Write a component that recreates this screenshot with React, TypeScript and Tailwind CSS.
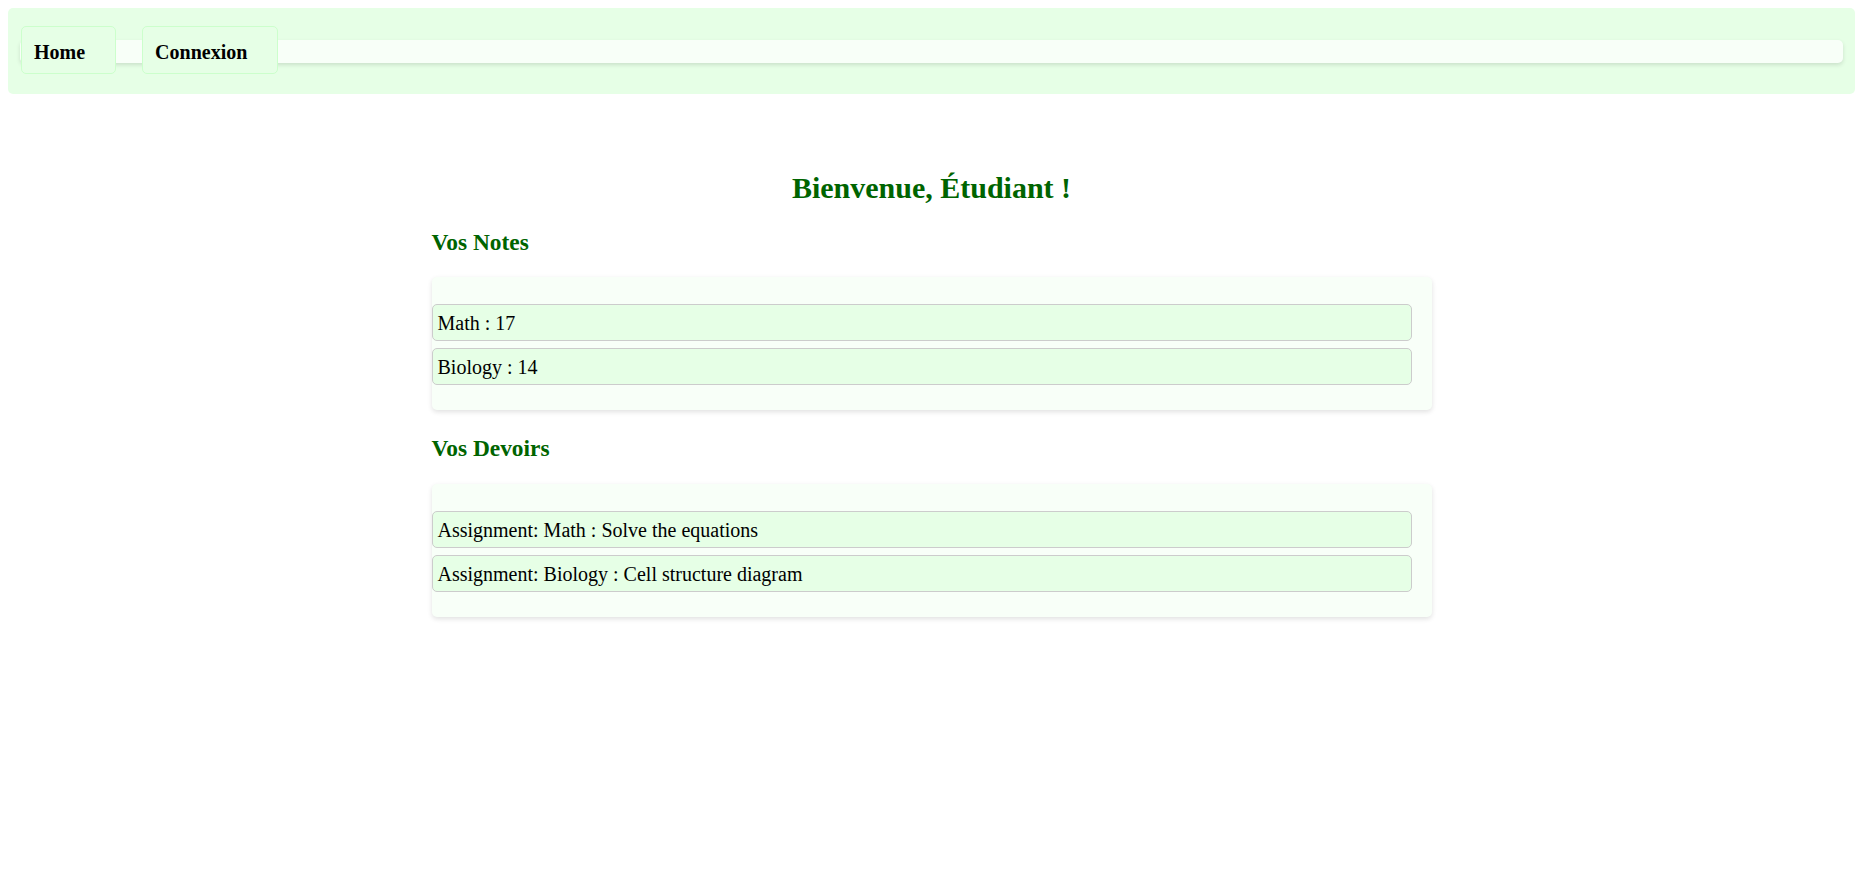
import React from "react";

const notes = ["Math : 17", "Biology : 14"];
const devoirs = [
  "Assignment: Math : Solve the equations",
  "Assignment: Biology : Cell structure diagram",
];

function Card({ items, className }: { items: string[]; className: string }) {
  return (
    <div
      className={`${className} w-[1000px] h-[133px] rounded-[5px] bg-[#f8fff8] pt-[27px] pr-[20px] shadow-[0_2px_5px_rgba(0,0,0,0.12)] flex flex-col gap-[7px]`}
    >
      {items.map((t) => (
        <div
          key={t}
          className="h-[37px] rounded-[5px] border border-[#cccccc] bg-[#e6ffe6] pl-[5px] flex items-center text-[20px] text-black"
        >
          {t}
        </div>
      ))}
    </div>
  );
}

export default function App() {
  return (
    <div
      className="min-h-[885px] bg-white text-[20px]"
      style={{ fontFamily: '"Liberation Serif", "Times New Roman", serif' }}
    >
      <header className="mx-2 mt-2 h-[86px] rounded-[5px] bg-[#e6ffe6] px-3 flex items-center">
        <nav className="flex-1 h-[23px] rounded-[5px] bg-[#f8fff8] shadow-[0_2px_4px_rgba(0,0,0,0.12)] flex items-center gap-[26px]">
          <a className="ml-px mb-[2px] h-[48px] pt-[3px] pl-[12px] pr-[30px] border border-[#ccffcc] bg-[#e6ffe6] rounded-[5px] flex items-center font-bold text-black">
            Home
          </a>
          <a className="mb-[2px] h-[48px] pt-[3px] pl-[12px] pr-[30px] border border-[#ccffcc] bg-[#e6ffe6] rounded-[5px] flex items-center font-bold text-black">
            Connexion
          </a>
        </nav>
      </header>
      <main className="mx-auto w-[1000px] flex flex-col">
        <h2 className="mt-[77px] text-center text-[30px] leading-[34px] font-bold text-[#006400]">
          Bienvenue, Étudiant !
        </h2>
        <h3 className="mt-[24px] text-[23.4px] leading-[27px] font-bold text-[#006400]">
          Vos Notes
        </h3>
        <Card items={notes} className="mt-[21px]" />
        <h3 className="mt-[25px] text-[23.4px] leading-[27px] font-bold text-[#006400]">
          Vos Devoirs
        </h3>
        <Card items={devoirs} className="mt-[22px]" />
      </main>
    </div>
  );
}
